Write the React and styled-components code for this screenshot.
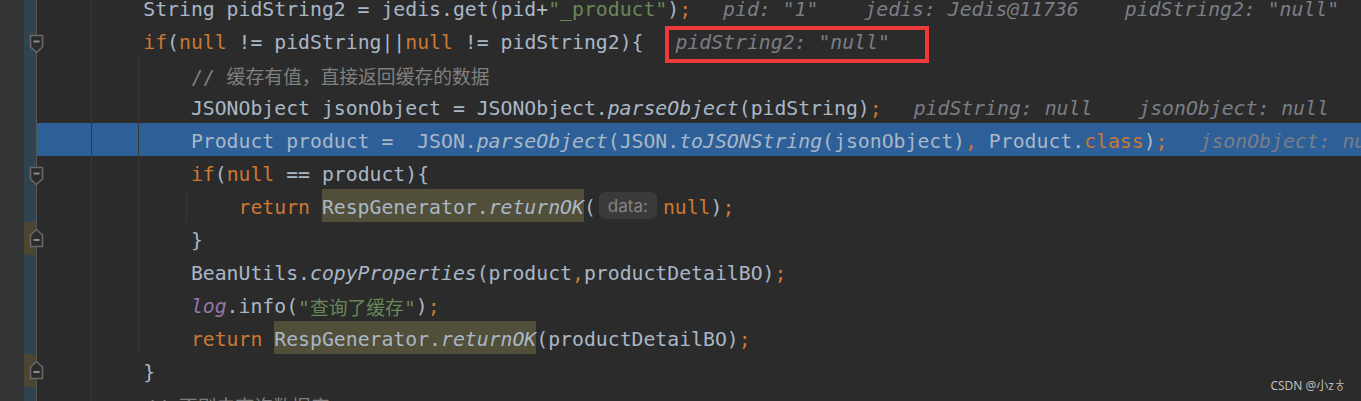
import React from "react";
import styled, { createGlobalStyle } from "styled-components";

const GlobalStyle = createGlobalStyle`
  html, body {
    margin: 0;
    padding: 0;
    background: #2b2b2b;
    overflow: hidden;
  }
`;

// token helpers
const p = (text, mark) => ({ kind: "plain", text, mark });
const k = (text) => ({ kind: "kw", text });
const s = (text) => ({ kind: "str", text });
const c = (text) => ({ kind: "cmt", text });
const m = (text, mark) => ({ kind: "method", text, mark });
const f = (text) => ({ kind: "field", text });
const param = (text) => ({ kind: "param", text });

const lines = [
  {
    level: 2,
    tokens: [p("String pidString2 = jedis.get(pid+"), s('"_product"'), p(")"), k(";")],
    hints: ['pid: "1"', "jedis: Jedis@11736", 'pidString2: "null"'],
  },
  {
    level: 2,
    fold: "down",
    tokens: [k("if"), p("("), k("null"), p(" != pidString||"), k("null"), p(" != pidString2){")],
    hints: ['pidString2: "null"'],
    boxed: true,
  },
  { level: 3, tokens: [c("// 缓存有值，直接返回缓存的数据")] },
  {
    level: 3,
    tokens: [p("JSONObject jsonObject = JSONObject."), m("parseObject"), p("(pidString)"), k(";")],
    hints: ["pidString: null", "jsonObject: null"],
  },
  {
    level: 3,
    active: true,
    tokens: [
      p("Product product =  JSON."),
      m("parseObject"),
      p("(JSON."),
      m("toJSONString"),
      p("(jsonObject)"),
      k(","),
      p(" Product."),
      k("class"),
      p(")"),
      k(";"),
    ],
    hints: ["jsonObject: null"],
  },
  {
    level: 3,
    fold: "down",
    tokens: [k("if"), p("("), k("null"), p(" == product){")],
  },
  {
    level: 4,
    tokens: [
      k("return"),
      p(" "),
      p("RespGenerator.", true),
      m("returnOK", true),
      p("("),
      param("data:"),
      k("null"),
      p(")"),
      k(";"),
    ],
  },
  { level: 3, fold: "up", tone: "brown", tokens: [p("}")] },
  {
    level: 3,
    tokens: [p("BeanUtils."), m("copyProperties"), p("(product"), k(","), p("productDetailBO)"), k(";")],
  },
  { level: 3, tokens: [f("log"), p(".info("), s('"查询了缓存"'), p(")"), k(";")] },
  {
    level: 3,
    tokens: [
      k("return"),
      p(" "),
      p("RespGenerator.", true),
      m("returnOK", true),
      p("(productDetailBO)"),
      k(";"),
    ],
  },
  { level: 2, fold: "up", tone: "brown", tokens: [p("}")] },
  { level: 2, tokens: [c("// 否则去查询数据库")] },
];

const colors = {
  plain: "#a9b7c6",
  kw: "#cc7832",
  str: "#6a8759",
  cmt: "#808080",
  method: "#a9b7c6",
  field: "#9876aa",
};

const Text = ({ children }) =>
  children.split(/([\u3000-\u9fff\uff00-\uffef]+)/).map((part, i) =>
    /[\u3000-\u9fff\uff00-\uffef]/.test(part) ? <Cjk key={i}>{part}</Cjk> : part
  );

const FoldMarker = ({ dir }) => (
  <Marker $dir={dir} width="15" height="20" viewBox="0 0 15 20">
    <path
      d={
        dir === "down"
          ? "M1.5 1.5 H13.5 V13 L7.5 18.5 L1.5 13 Z"
          : "M1.5 18.5 H13.5 V7 L7.5 1.5 L1.5 7 Z"
      }
      fill="#2b2b2b"
      stroke="#686868"
      strokeWidth="1.6"
    />
    <rect x="4.5" y={dir === "down" ? 6.5 : 11} width="6" height="2" fill="#8c8c8c" />
  </Marker>
);

export default function App() {
  return (
    <Editor>
      <GlobalStyle />
      <Lines>
        {lines.map((line, i) => (
          <Line key={i}>
            <GutterPad />
            <ChangeStrip $tone={line.tone} />
            <FoldLine />
            {line.fold && <FoldMarker dir={line.fold} />}
            <Code $active={line.active}>
              {Array.from({ length: line.level }).map((_, j) => (
                <Indent key={j} $guide={j < line.level - 1} />
              ))}
              {line.tokens.map((t, j) =>
                t.kind === "param" ? (
                  <ParamHint key={j}>{t.text}</ParamHint>
                ) : (
                  <Token key={j} $kind={t.kind} $mark={t.mark}>
                    <Text>{t.text}</Text>
                  </Token>
                )
              )}
              {line.hints && (
                <Hints>
                  {line.hints.map((h, j) => (
                    <Hint key={j}>
                      {h}
                      {line.boxed && <RedBox />}
                    </Hint>
                  ))}
                </Hints>
              )}
            </Code>
          </Line>
        ))}
      </Lines>
      <Watermark>CSDN @小z♁</Watermark>
    </Editor>
  );
}

// EDITOR
const Editor = styled.div`
  position: relative;
  width: 1361px;
  height: 401px;
  overflow: hidden;
  background: #2b2b2b;
  font-family: "DejaVu Sans Mono", "Noto Sans CJK SC", monospace;
  font-size: 19.8px;
  color: #a9b7c6;
`;

const Lines = styled.div`
  display: flex;
  flex-direction: column;
  margin-top: -9px;
`;

const Line = styled.div`
  position: relative;
  display: flex;
  height: 33px;
`;

// GUTTER
const GutterPad = styled.div`
  flex: none;
  width: 24px;
  background: #313335;
`;

const ChangeStrip = styled.div`
  flex: none;
  width: 12px;
  background: ${(props) => (props.$tone === "brown" ? "#4b4532" : "#2f4350")};
`;

const FoldLine = styled.div`
  flex: none;
  width: 1px;
  background: #555555;
`;

const Marker = styled.svg`
  position: absolute;
  left: 29px;
  top: ${(props) => (props.$dir === "down" ? "10px" : "6px")};
  z-index: 2;
`;

// CODE
const Code = styled.div`
  flex: 1;
  min-width: 0;
  display: flex;
  align-items: stretch;
  padding-left: 11px;
  white-space: pre;
  background: ${(props) => (props.$active ? "#2d5f99" : "transparent")};
`;

const Indent = styled.span`
  flex: none;
  width: 4ch;
  background: ${(props) =>
    props.$guide ? "linear-gradient(#373737, #373737) no-repeat" : "none"};
  background-size: 1px 100%;
  background-position: calc(100% - 4px) 0;
`;

const Token = styled.span`
  flex: none;
  display: block;
  height: 33px;
  line-height: 37px;
  color: ${(props) => colors[props.$kind]};
  font-style: ${(props) =>
    props.$kind === "method" || props.$kind === "field" ? "italic" : "normal"};
  background: ${(props) => (props.$mark ? "#514e39" : "transparent")};
`;

const Cjk = styled.span`
  font-family: "Noto Sans CJK SC", sans-serif;
  font-size: 18.8px;
`;

const ParamHint = styled.span`
  flex: none;
  align-self: center;
  display: flex;
  align-items: center;
  height: 27px;
  margin: 0 6px 0 3px;
  padding: 0 9px;
  border-radius: 6px;
  background: #3a3a3a;
  color: #858585;
  font-family: "Inter", "Noto Sans", sans-serif;
  font-size: 17px;
`;

// DEBUGGER INLINE VALUES
const Hints = styled.span`
  flex: none;
  display: flex;
  align-items: stretch;
  gap: 46px;
  margin-left: 32px;
`;

const Hint = styled.span`
  position: relative;
  display: block;
  line-height: 37px;
  color: #7a7e85;
  font-style: italic;
`;

const RedBox = styled.span`
  position: absolute;
  left: -10px;
  top: 2px;
  width: 264px;
  height: 37px;
  box-sizing: border-box;
  border: 4px solid #ee3a3a;
`;

const Watermark = styled.div`
  position: absolute;
  right: 15px;
  top: 376px;
  font-family: "Noto Sans", "Noto Sans CJK SC", sans-serif;
  font-size: 12px;
  color: #bdbdbd;
`;
